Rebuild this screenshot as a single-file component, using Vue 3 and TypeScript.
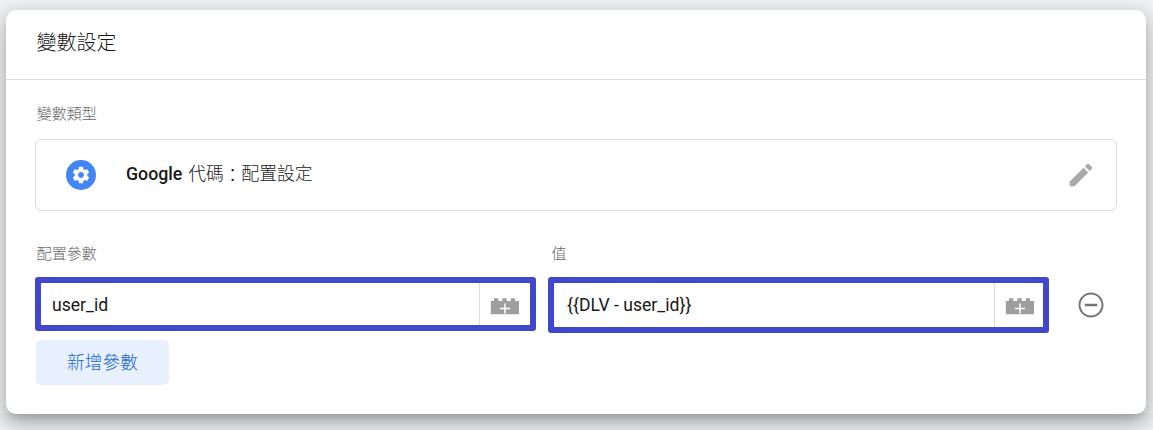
<script setup lang="ts">
import { ref } from 'vue'

const params = ref([
  { label: '配置參數', value: 'user_id', kind: 'name' },
  { label: '值', value: '{{DLV - user_id}}', kind: 'value' },
])
</script>

<template>
  <main class="page">
    <section class="card">
      <header class="head"><h1>變數設定</h1></header>
      <div class="body">
        <div class="label">變數類型</div>
        <div class="type">
          <span class="badge">
            <svg width="20" height="20" viewBox="0 0 24 24" fill="#fff"><path d="M19.43 12.98c.04-.32.07-.64.07-.98s-.03-.66-.07-.98l2.11-1.65c.19-.15.24-.42.12-.64l-2-3.46c-.12-.22-.39-.3-.61-.22l-2.49 1c-.52-.4-1.08-.73-1.69-.98l-.38-2.65C14.46 2.18 14.25 2 14 2h-4c-.25 0-.46.18-.49.42l-.38 2.65c-.61.25-1.17.59-1.69.98l-2.49-1c-.23-.09-.49 0-.61.22l-2 3.46c-.13.22-.07.49.12.64l2.11 1.65c-.04.32-.07.65-.07.98s.03.66.07.98l-2.11 1.65c-.19.15-.24.42-.12.64l2 3.46c.12.22.39.3.61.22l2.49-1c.52.4 1.08.73 1.69.98l.38 2.65c.03.24.24.42.49.42h4c.25 0 .46-.18.49-.42l.38-2.65c.61-.25 1.17-.59 1.69-.98l2.49 1c.23.09.49 0 .61-.22l2-3.46c.12-.22.07-.49-.12-.64l-2.11-1.65zM12 15.5c-1.93 0-3.5-1.57-3.5-3.5s1.57-3.5 3.5-3.5 3.5 1.57 3.5 3.5-1.57 3.5-3.5 3.5z" /></svg>
          </span>
          <span class="type-name"><b>Google</b> 代碼<i class="colon">：</i>配置設定</span>
          <svg class="pencil" width="30" height="30" viewBox="0 0 24 24" fill="#a9a9a9"><path d="M3 17.25V21h3.75L17.81 9.94l-3.75-3.75L3 17.25zM20.71 7.04c.39-.39.39-1.02 0-1.41l-2.34-2.34c-.39-.39-1.02-.39-1.41 0l-1.83 1.83 3.75 3.75 1.83-1.83z" /></svg>
        </div>
        <div class="params">
          <div v-for="p in params" :key="p.kind" class="param">
            <div class="label">{{ p.label }}</div>
            <div class="field" :class="p.kind">
              <span class="text">{{ p.value }}</span>
              <span class="brick">
                <svg width="30" height="17" viewBox="0 0 30 17"><path fill="#9e9e9e" d="M.8 3H4V.3h4.3V3h4V.3h4.4V3h4V.3H25V3h4v13.2H.8z" /><path fill="#fff" d="M14.2 5.5h1.5v4.2H20v1.5h-4.3v4.2h-1.5v-4.2H9.9V9.7h4.3z" /></svg>
              </span>
            </div>
          </div>
          <svg class="remove" width="30" height="30" viewBox="0 0 24 24" fill="#757575"><path d="M7 11v2h10v-2H7zm5-9C6.48 2 2 6.48 2 12s4.48 10 10 10 10-4.48 10-10S17.52 2 12 2zm0 18.4c-4.64 0-8.4-3.76-8.4-8.4s3.76-8.4 8.4-8.4 8.4 3.76 8.4 8.4-3.76 8.4-8.4 8.4z" /></svg>
        </div>
        <button class="add" type="button">新增參數</button>
      </div>
    </section>
  </main>
</template>

<style>
body {
  margin: 0;
}
</style>

<style scoped>
.page {
  box-sizing: border-box;
  height: 430px;
  padding: 10px 7px 16px 6px;
  background: #f1f3f4;
  overflow: hidden;
  font-family: Roboto, "Noto Sans CJK TC", sans-serif;
  color: #181818;
}
.card {
  height: 404px;
  background: #fff;
  border-radius: 10px;
  box-shadow: 0 8px 10px -5px rgba(0, 0, 0, 0.2), 0 10px 24px 2px rgba(0, 0, 0, 0.14), 0 6px 20px 5px rgba(0, 0, 0, 0.12);
}
.head {
  box-sizing: border-box;
  height: 70px;
  padding: 18px 30.5px 0;
  border-bottom: 1px solid #dadce0;
}
h1 {
  margin: 0;
  font-size: 20px;
  line-height: 30px;
  font-weight: 300;
}
.body {
  padding: 22px 29px 0;
}
.label {
  height: 24px;
  padding-left: 1.7px;
  font-size: 15px;
  line-height: 24px;
  font-weight: 300;
  color: #666;
}
.type {
  box-sizing: border-box;
  display: flex;
  align-items: center;
  height: 72px;
  margin-top: 13px;
  padding: 0 20px 0 30px;
  border: 1px solid #dadce0;
  border-radius: 6px;
}
.badge {
  display: flex;
  align-items: center;
  justify-content: center;
  width: 30px;
  height: 30px;
  border-radius: 50%;
  background: #4285f4;
}
.type-name {
  flex: 1;
  margin: -7px 0 0 30px;
  font-size: 17.75px;
  font-weight: 300;
}
.type-name b {
  margin-right: 1.5px;
  font-weight: 500;
}
.colon {
  display: inline-block;
  font-style: normal;
  transform: translateY(2px);
}
.params {
  display: flex;
  gap: 12px;
  margin-top: 31px;
}
.param {
  width: 501px;
}
.param + .param .label {
  padding-left: 3.6px;
}
.field {
  box-sizing: border-box;
  display: flex;
  height: 54px;
  margin-top: 11px;
  border: 6px solid #3f48cc;
  border-radius: 3px;
}
.field.value {
  height: 56px;
}
.text {
  flex: 1;
  padding-left: 11px;
  font-size: 17.6px;
  line-height: 45px;
}
.value .text {
  padding-left: 13px;
}
.brick {
  display: flex;
  box-sizing: border-box;
  width: 51px;
  padding: 15px 0 0 10px;
  border-left: 1px solid #dadce0;
}
.remove {
  margin: 48px 0 0 15px;
}
.value .brick {
  width: 49px;
}
.add {
  display: block;
  width: 133px;
  height: 45px;
  margin: 7px 0 0 1px;
  padding: 0 0 4px;
  border: 0;
  border-radius: 5px;
  background: #e8f0fe;
  color: #1967d2;
  font-family: inherit;
  font-size: 17.7px;
  font-weight: 300;
}
</style>
